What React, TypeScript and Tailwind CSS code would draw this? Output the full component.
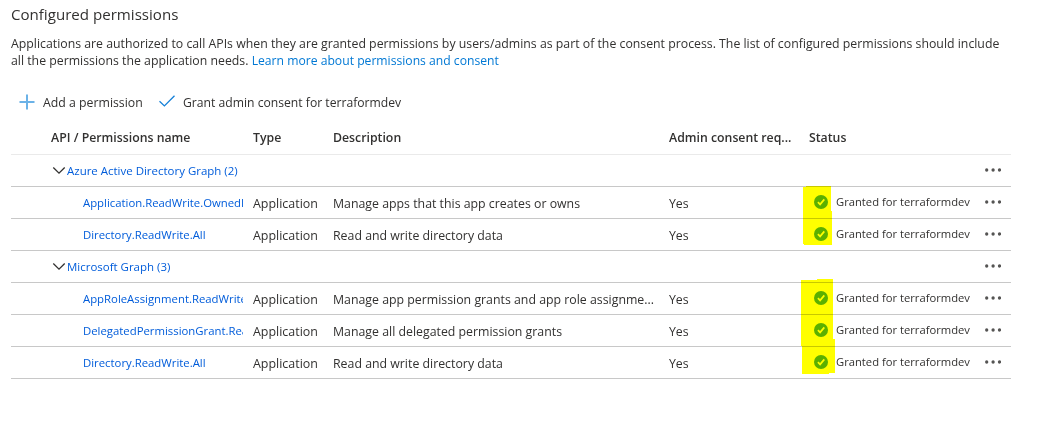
type Permission = {
  name: string;
  description: string;
};

type ApiGroup = {
  title: string;
  permissions: Permission[];
};

const groups: ApiGroup[] = [
  {
    title: 'Azure Active Directory Graph (2)',
    permissions: [
      { name: 'Application.ReadWrite.OwnedBy', description: 'Manage apps that this app creates or owns' },
      { name: 'Directory.ReadWrite.All', description: 'Read and write directory data' },
    ],
  },
  {
    title: 'Microsoft Graph (3)',
    permissions: [
      {
        name: 'AppRoleAssignment.ReadWrite.All',
        description: 'Manage app permission grants and app role assignme...',
      },
      {
        name: 'DelegatedPermissionGrant.ReadWrite.All',
        description: 'Manage all delegated permission grants',
      },
      { name: 'Directory.ReadWrite.All', description: 'Read and write directory data' },
    ],
  },
];

function PlusIcon() {
  return (
    <svg width="16" height="16" viewBox="0 0 16 16" fill="none" stroke="#6bb2e7" strokeWidth="2">
      <path d="M8 0.5v15M0.5 8h15" />
    </svg>
  );
}

function CheckIcon() {
  return (
    <svg width="16" height="16" viewBox="0 0 16 16" fill="none" stroke="#1580d8" strokeWidth="1.3">
      <path d="M0.5 7.2l4.9 4.7L15.5 1.7" />
    </svg>
  );
}

function ChevronIcon() {
  return (
    <svg width="14" height="14" viewBox="0 0 14 14" fill="none" stroke="#323130" strokeWidth="1.3">
      <path d="M1.3 3.5l5.7 5.7L12.7 3.5" />
    </svg>
  );
}

function GrantedIcon() {
  return (
    <svg width="14" height="14" viewBox="0 0 14 14" fill="none">
      <circle cx="7" cy="7" r="7" fill="#5bb000" />
      <path d="M3.9 7.1l2.2 2.3 4.2-5" stroke="#fff" strokeWidth="1.7" />
    </svg>
  );
}

function MoreButton() {
  return (
    <button className="ml-auto mr-[10px] pb-[2px]" aria-label="More">
      <svg width="16" height="4" viewBox="0 0 16 4" fill="#555453">
        <circle cx="1.7" cy="2" r="1.65" />
        <circle cx="8.1" cy="2" r="1.65" />
        <circle cx="14.5" cy="2" r="1.65" />
      </svg>
    </button>
  );
}

function GroupRow({ title }: { title: string }) {
  return (
    <div className="flex h-8 items-center border-b border-[#c8c8c8] pl-[41px]">
      <ChevronIcon />
      <a className="ml-px text-[11.48px] text-[#015cda]">{title}</a>
      <MoreButton />
    </div>
  );
}

function PermissionRow({ name, description }: Permission) {
  return (
    <div className="flex h-8 items-center border-b border-[#c8c8c8]">
      <div className="ml-[72px] w-[160px] overflow-hidden text-[11.35px] text-[#015cda]">{name}</div>
      <div className="ml-[10px] w-[80px] pt-[4px] text-[12.45px]">Application</div>
      <div className="w-[336px] pt-[4px] text-[12.34px]">{description}</div>
      <div className="w-[145px] pt-[4px] text-[12.3px]">Yes</div>
      <div className="flex items-center gap-[8px] pb-px text-[11.23px]">
        <GrantedIcon />
        <span>Granted for terraformdev</span>
      </div>
      <MoreButton />
    </div>
  );
}

function Highlights() {
  return (
    <svg
      className="pointer-events-none absolute left-[800px] top-[184px] mix-blend-multiply"
      width="36"
      height="192"
      viewBox="800 184 36 192"
      fill="#ffff00"
      shapeRendering="crispEdges"
    >
      <path d="M803 187h3v-1h25v25h1v34h-28v-1h-1z" />
      <path d="M801 280h16v-1h16v60h2v34h-6v1h-27v-28h-1z" />
    </svg>
  );
}

export default function App() {
  return (
    <main className="relative h-[438px] w-[1044px] overflow-hidden whitespace-nowrap bg-white pl-[11px] font-['Open_Sans','Noto_Sans',sans-serif] text-[#323130]">
      <h2 className="pt-[3px] text-[15.1px] leading-[22px]">Configured permissions</h2>
      <p className="mt-[10px] text-[12.3px] leading-[17px]">
        Applications are authorized to call APIs when they are granted permissions by users/admins as part of the
        consent process. The list of configured permissions should include
        <br />
        all the permissions the application needs.{' '}
        <a className="text-[12.16px] text-[#0078d4]">Learn more about permissions and consent</a>
      </p>

      <div className="mt-[23px] flex h-[20px] items-center pl-[8px] text-[12.17px]">
        <div className="flex w-[140px] items-center gap-[8px]">
          <PlusIcon />
          <span className="pt-[2px] text-[12.3px]">Add a permission</span>
        </div>
        <div className="flex items-center gap-[8px]">
          <CheckIcon />
          <span className="pt-[2px]">Grant admin consent for terraformdev</span>
        </div>
      </div>

      <section className="w-[1000px]">
        <div className="mt-[10px] flex h-[33px] items-center border-b border-[#eaeaea] pl-[40px] text-[12.3px] font-[550]">
          <div className="w-[202px]">API / Permissions name</div>
          <div className="w-[80px]">Type</div>
          <div className="w-[336px]">Description</div>
          <div className="w-[140px]">Admin consent req...</div>
          <div>Status</div>
        </div>
        {groups.map((group) => (
          <div key={group.title}>
            <GroupRow title={group.title} />
            {group.permissions.map((permission) => (
              <PermissionRow key={permission.name} {...permission} />
            ))}
          </div>
        ))}
      </section>

      <Highlights />
    </main>
  );
}
